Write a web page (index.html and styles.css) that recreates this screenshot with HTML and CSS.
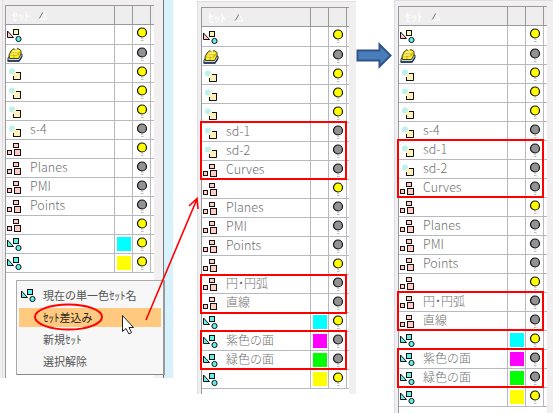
FILE: index.html
```html
<!DOCTYPE html>
<html lang="ja">
<head>
<meta charset="utf-8">
<title>セット</title>
<link rel="stylesheet" href="styles.css">
</head>
<body>
<svg class="defs" width="0" height="0" aria-hidden="true">
  <symbol id="shapes" viewBox="0 0 16 15">
    <path d="M.5 3V9.500H6.500Z" fill="#ffc8c0" stroke="#111"/>
    <rect x="6.500" y="1.500" width="5" height="5" fill="#fff3bd" stroke="#111"/>
    <circle cx="11.500" cy="11" r="2.600" fill="#62f0ed" stroke="#111"/>
  </symbol>
  <symbol id="aqua" viewBox="0 0 16 15">
    <path d="M.5 2V8.500H6.500Z" fill="#62f0ed" stroke="#111"/>
    <rect x="6.500" y=".5" width="5" height="5" fill="#62f0ed" stroke="#111"/>
    <circle cx="11.500" cy="10" r="2.600" fill="#62f0ed" stroke="#111"/>
  </symbol>
  <symbol id="blocks" viewBox="0 0 16 15">
    <g fill="#ffcdc5" stroke="#181010"><rect x="6.500" y=".5" width="5" height="4"/><rect x=".5" y="7.500" width="4" height="4"/><rect x="7.500" y="6.500" width="6" height="6"/></g>
  </symbol>
  <symbol id="single" viewBox="0 0 16 15">
    <circle cx="5" cy="4.500" r="3" fill="#b8f2f1"/>
    <rect x="6" y="5" width="8" height="8" fill="#fff1bd"/>
    <path d="M13.500 5V12.500H6M9 5.500H14M6.500 9V13" fill="none" stroke="#111"/>
  </symbol>
  <symbol id="files" viewBox="0 0 16 15">
    <path d="M1 10L4 6H15V8.500L12 13H1Z" fill="#bfdcf0" stroke="#243244"/>
    <path d="M2 7L4 3 7 .5 8.500 2 11 .5 14 2.500V6L11.500 10.500H2.500Z" fill="#ffef20" stroke="#453c18"/>
    <path d="M3 7H11L13.500 3M4 5H12M7 7V10" fill="none" stroke="#9a8414" stroke-width=".6"/>
    <path d="M4 6H10M6 3.500H11M8 2L10 1.500" stroke="#fff8b8" fill="none"/>
    <path d="M.5 13H12L15 8.500" fill="none" stroke="#1d2b48" stroke-width="1.300"/>
  </symbol>
  <symbol id="bulb" viewBox="0 0 12 14">
    <circle cx="6" cy="5.500" r="4.500" fill="currentColor" stroke="#151515" stroke-width="1.200"/>
    <path d="M5 11.500H7.500" stroke="#ccc"/><path d="M5 13.500H7.500" stroke="#bbb"/>
  </symbol>
</svg>
<main class="stage">
  <section class="panel panel-a"><div class="table" data-list="base"></div></section>
  <section class="panel panel-b"><div class="table" data-list="merged"></div></section>
  <section class="panel panel-c"><div class="table" data-list="full"></div></section>

  <div class="menu">
    <div class="item"><svg class="menu-icon"><use href="#aqua"/></svg><span>現在の単一色ｾｯﾄ名</span></div>
    <div class="item active"><span>ｾｯﾄ差込み</span></div>
    <div class="item"><span>新規ｾｯﾄ</span></div>
    <div class="item"><span>選択解除</span></div>
  </div>

  <svg class="notes" viewBox="0 0 553 413" width="553" height="413">
    <g fill="none" stroke="#f00" stroke-width="2">
      <rect x="201" y="122" width="145" height="57"/>
      <rect x="201" y="275" width="145" height="38"/>
      <rect x="201" y="331" width="145" height="38"/>
      <rect x="398" y="140" width="145" height="57"/>
      <rect x="398" y="292" width="145" height="38"/>
      <rect x="398" y="349" width="145" height="38"/>
      <ellipse cx="68.500" cy="317" rx="33.500" ry="12.500"/>
      <path d="M146 320L197 199M189 206L197 198.500L198 209" stroke-width="1.600"/>
    </g>
    <path d="M122.500 315.500V331.500L126 328.500L129 334L131.500 332.500L129 327.500H133.500Z" fill="#fff" stroke="#222"/>
    <path d="M357.500 50.500H379.500V44.500L390.500 55.500L379.500 66.500V60.500H357.500Z" fill="#4a7ebb" stroke="#2f5489" stroke-width="2"/>
  </svg>
</main>
<script src="script.js"></script>
</body>
</html>
```
FILE: styles.css
```css
* { box-sizing: border-box; }
body {
  margin: 0;
  background: #fff;
  font-family: "Noto Sans CJK JP", "Liberation Sans", sans-serif;
}
.defs { position: absolute; }
.stage {
  position: relative;
  display: flex;
  align-items: flex-start;
  width: 553px;
  height: 413px;
  overflow: hidden;
}
.panel { flex: none; background: #f1efef; }
.panel-a {
  width: 173px;
  height: 378px;
  padding: 5px 10px 0 5px;
  border-right: 9px solid #d8f2fd;
  box-shadow: inset -1px 0 #777, inset 2px 0 #f3f0f0, inset 3px 0 #dcdce2;
}
.panel-b {
  width: 159px;
  height: 393px;
  margin: 1px 0 0 24px;
  padding: 5px 7px 0 3px;
  border-left: 1px solid #dedee6;
  border-top: 1px solid #dedede;
}
.panel-c {
  width: 159px;
  height: 413px;
  margin-left: 38px;
  padding: 5px 6px 0 3px;
  border-left: 1px solid #d8dbea;
  border-top: 1px solid #dedede;
}
.table {
  height: 100%;
  background: #fff;
  border-left: 1px solid #999;
  border-top: 1px solid #999;
}
.row {
  display: grid;
  grid-template-columns: 24px 85px 18px 18px 1fr;
  height: 19px;
  border-bottom: 1px solid #b8b8c0;
}
.row > * { min-width: 0; }
.row.first { height: 20px; }
.row.head {
  grid-template-columns: 109px 18px 18px 1fr;
  height: 19px;
  background: #efeeee;
  border-color: #999;
}
.head .title {
  display: flex;
  align-items: center;
  gap: 8px;
  padding-left: 6px;
  color: #fff;
  font-size: 12px;
  line-height: 17px;
}
.sort { width: 10px; height: 9px; }
.title, .name, .swatch-cell, .lamp { border-right: 1px solid #b8b8c0; }
.head .title, .head .swatch-cell, .head .lamp { border-color: #999; }
.icon { width: 16px; height: 15px; margin: 3px 0 0 1px; }
.name {
  color: #707070;
  font-size: 12px;
  font-weight: 300;
  line-height: 15px;
  white-space: nowrap;
}
.latin { font-size: 12.5px; }
.tight { font-feature-settings: "halt"; }
.swatch-cell { padding: 2px 1px 2px 2px; }
.swatch { width: 14px; height: 14px; }
.lamp { display: flex; justify-content: center; padding-top: 2px; }
.bulb { width: 12px; height: 14px; }
.on { color: #ff0; }
.off { color: #929292; }
.cyan { background: #0ff; }
.magenta { background: #f0f; }
.green { background: #0f0; }
.yellow { background: #ff0; }
.menu {
  position: absolute;
  left: 16px;
  top: 280px;
  width: 149px;
  height: 95px;
  padding: 3px 2px;
  background: #f7f7f7;
  border: 1px solid #aaa;
  border-right: 2px solid #999;
  border-bottom-color: #888;
}
.item {
  display: flex;
  align-items: center;
  height: 22px;
  padding-left: 24px;
  color: #555;
  font-size: 11px;
  line-height: 18px;
  white-space: nowrap;
}
.item:first-child { height: 24px; padding-left: 2px; gap: 6px; }
.item.active { height: 19px; margin-bottom: 1px; background: #ffca80; color: #292420; }
.item:first-child span, .item.active span { padding-bottom: 2px; }
.menu-icon { width: 16px; height: 15px; }
.notes { position: absolute; inset: 0; }
```
FILE: script.js
```js
const start = [
  ['shapes', '', 1], ['files', '', 0],
  ['single', '', 1], ['single', '', 1], ['single', '', 1]
];
const s4 = ['single', 's-4', 0];
const added = [['single', 'sd-1', 0], ['single', 'sd-2', 0], ['blocks', 'Curves', 0]];
const common = [
  ['blocks', '', 1], ['blocks', 'Planes', 0], ['blocks', 'PMI', 0],
  ['blocks', 'Points', 0], ['blocks', '', 1]
];
const tail = [
  ['blocks', '円・円弧', 0], ['blocks', '直線', 0], ['aqua', '', 1, 'cyan'],
  ['aqua', '紫色の面', 0, 'magenta'], ['aqua', '緑色の面', 0, 'green'], ['aqua', '', 1, 'yellow']
];
const lists = {
  base: [...start, s4, ...common, ['aqua', '', 1, 'cyan'], ['aqua', '', 1, 'yellow']],
  merged: [...start, ...added, ...common, ...tail],
  full: [...start, s4, ...added, ...common, ...tail]
};
const header = `<div class="row head"><div class="title"><span>ｾｯﾄ</span>
  <svg class="sort" viewBox="0 0 10 9"><path d="M1 8L5 1" stroke="#777" fill="none"/><path d="M5 1L9 8H1" stroke="#fff" fill="none"/></svg>
  </div><div class="swatch-cell"></div><div class="lamp"></div></div>`;

function row([icon, name, lit, color], index) {
  const style = /^[A-Za-z]/.test(name) ? ' latin' : name.includes('・') ? ' tight' : '';
  return `<div class="row${index === 0 ? ' first' : ''}">
    <svg class="icon"><use href="#${icon}"/></svg>
    <div class="name${style}">${name}</div>
    <div class="swatch-cell">${color ? `<div class="swatch ${color}"></div>` : ''}</div>
    <div class="lamp"><svg class="bulb ${lit ? 'on' : 'off'}"><use href="#bulb"/></svg></div>
  </div>`;
}
document.querySelectorAll('[data-list]').forEach(table => {
  table.innerHTML = header + lists[table.dataset.list].map(row).join('');
});
```
